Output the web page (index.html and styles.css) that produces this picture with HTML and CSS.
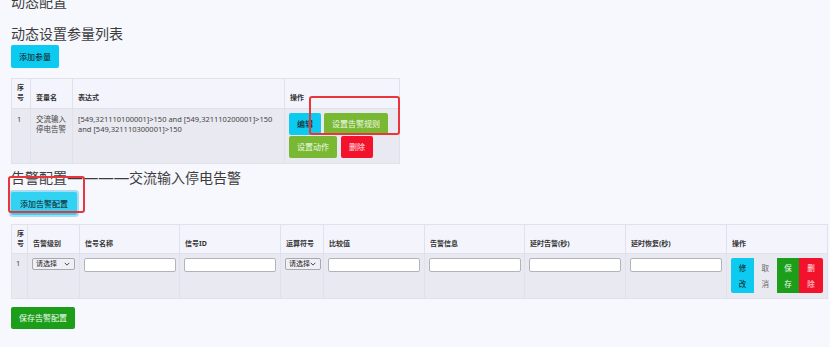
FILE: index.html
```html
<!DOCTYPE html>
<html>
<head>
	<title>动态配置</title>
	<meta charset="utf-8">
	<link rel="stylesheet" href="styles.css">
</head>
<body>
	<div class="page">
		<h3 class="title top">动态配置</h3>
		<h3 class="title sub">动态设置参量列表</h3>
		<div class="bar">
			<button class="btn info">添加参量</button>
		</div>

		<!-- 参量列表 -->
		<table class="grid var-table">
			<colgroup>
				<col style="width:19px">
				<col style="width:42px">
				<col style="width:212px">
				<col style="width:115px">
			</colgroup>
			<thead>
				<tr>
					<th>序号</th>
					<th>变量名</th>
					<th>表达式</th>
					<th>操作</th>
				</tr>
			</thead>
			<tbody>
				<tr>
					<td>1</td>
					<td>交流输入停电告警</td>
					<td class="expr">[549,321110100001]&gt;150 and [549,321110200001]&gt;150 and [549,321110300001]&gt;150</td>
					<td class="ops">
						<div class="ops-list">
							<button class="btn info">编辑</button>
							<button class="btn lime">设置告警规则</button>
							<button class="btn lime">设置动作</button>
							<button class="btn red">删除</button>
						</div>
					</td>
				</tr>
			</tbody>
		</table>

		<h3 class="title alarm">告警配置<span class="dash">————</span>交流输入停电告警</h3>
		<div class="bar">
			<button class="btn info focus">添加告警配置</button>
		</div>

		<!-- 告警配置列表 -->
		<table class="grid alarm-table">
			<colgroup>
				<col style="width:16px">
				<col style="width:52px">
				<col style="width:100px">
				<col style="width:101px">
				<col style="width:43px">
				<col style="width:101px">
				<col style="width:100px">
				<col style="width:101px">
				<col style="width:101px">
				<col style="width:101px">
			</colgroup>
			<thead>
				<tr>
					<th>序号</th>
					<th>告警级别</th>
					<th>信号名称</th>
					<th>信号ID</th>
					<th>运算符号</th>
					<th>比较值</th>
					<th>告警信息</th>
					<th>延时告警(秒)</th>
					<th>延时恢复(秒)</th>
					<th>操作</th>
				</tr>
			</thead>
			<tbody>
				<tr>
					<td>1</td>
					<td>
						<span class="sel">
							<select><option>请选择</option></select>
							<svg viewBox="0 0 8 5" width="6" height="4"><path d="M1 1l3 3 3-3" fill="none" stroke="#444" stroke-width="1.3"/></svg>
						</span>
					</td>
					<td><input class="field" type="text"></td>
					<td><input class="field" type="text"></td>
					<td>
						<span class="sel">
							<select><option>请选择</option></select>
							<svg viewBox="0 0 8 5" width="6" height="4"><path d="M1 1l3 3 3-3" fill="none" stroke="#444" stroke-width="1.3"/></svg>
						</span>
					</td>
					<td><input class="field" type="text"></td>
					<td><input class="field" type="text"></td>
					<td><input class="field" type="text"></td>
					<td><input class="field" type="text"></td>
					<td class="ops">
						<div class="row-btns">
							<button class="vbtn info">修改</button>
							<button class="vbtn plain">取消</button>
							<button class="vbtn green">保存</button>
							<button class="vbtn red">删除</button>
						</div>
					</td>
				</tr>
			</tbody>
		</table>

		<div class="bar save-bar">
			<button class="btn green">保存告警配置</button>
		</div>

		<!-- 标注框 -->
		<div class="mark mark-rule"></div>
		<div class="mark mark-add"></div>
	</div>
</body>
</html>
```

FILE: styles.css
```css
body{
	margin: 0;
	background-color: #f7f7fe;
	font-family: "Noto Sans", "Noto Sans CJK SC", sans-serif;
	color: #444;
}

.page{
	position: relative;
	padding: 0 11px;
}

/*标题*/
.title{
	font-size: 14px;
	line-height: 17px;
	font-weight: normal;
	color: #3d3d3d;
	margin: 0;
}
.top{
	margin-top: -7px;
}
.sub{
	margin-top: 15px;
	margin-bottom: 3px;
}
.alarm{
	height: 17px;
	margin-top: 5px;
	margin-bottom: 6px;
}
/*破折号用 DejaVu，字形占满整个字宽，能连成一条线*/
.dash{
	font-family: "DejaVu Sans", sans-serif;
	font-size: 16px;
	letter-spacing: -0.5px;
	line-height: 10px;
}

.bar{
	display: flex;
}

/*按钮*/
.btn{
	height: 23px;
	padding: 0 8px;
	border: none;
	border-radius: 2px;
	font-family: inherit;
	font-size: 8px;
	line-height: 23px;
	color: #fff;
	cursor: pointer;
}
.info{
	background-color: #0dcaf0;
	color: #111;
}
.focus{
	background-color: #31d2f2;
	padding: 0 9px;
	box-shadow: 0 0 0 2px rgba(120, 200, 225, .6);
}
.lime{
	background-color: #78b832;
	color: #f4f9ee;
}
.red{
	background-color: #f3122b;
	color: #ffe6e9;
}
.green{
	background-color: #1c9e1a;
	color: #f2fbf2;
}

/*表格*/
.grid{
	table-layout: fixed;
	border-collapse: collapse;
	font-size: 7px;
	line-height: 10px;
	color: #444;
}
.grid th,
.grid td{
	border: 1px solid #e0e1ea;
	padding: 4px 5px 5px;
	text-align: left;
}
.grid th{
	background-color: #f4f4fc;
	vertical-align: bottom;
	font-weight: bold;
	color: #333;
	height: 20px;
}
.grid td{
	background-color: #e9e9f1;
	vertical-align: top;
	font-size: 7.5px;
}

.var-table{
	width: 388px;
	margin-top: 10px;
}
.var-table td{
	height: 44px;
	padding-top: 5px;
}
.var-table .expr{
	padding-right: 2px;
}
.var-table .ops{
	padding: 4px 4px 5px;
}
.ops-list{
	display: flex;
	flex-wrap: wrap;
	gap: 1px 3px;
}
.ops-list .btn{
	height: 22px;
	line-height: 22px;
}
.ops-list .red{
	margin-left: 1px;
}

.alarm-table{
	width: 816px;
	margin-top: 9px;
}
.alarm-table th{
	padding: 4px 4px 4px 5px;
}
.alarm-table td{
	height: 35px;
	padding: 4px 4px 5px;
}

/*下拉框*/
.sel{
	position: relative;
	display: inline-block;
}
.sel select{
	appearance: none;
	-webkit-appearance: none;
	width: 43px;
	height: 12px;
	padding: 0 0 0 3px;
	border: 1px solid #a8a8b0;
	border-radius: 2px;
	background-color: #efeff5;
	font-family: inherit;
	font-size: 7px;
	line-height: 10px;
	color: #222;
	display: block;
}
.alarm-table td:nth-child(5) .sel select{
	width: 36px;
}
.sel svg{
	position: absolute;
	right: 5px;
	top: 4px;
}

/*输入框*/
.field{
	display: block;
	width: 92px;
	height: 14px;
	box-sizing: border-box;
	border: 1px solid #b3b3bb;
	border-radius: 2px;
	background-color: #fff;
	padding: 0 3px;
}

/*竖排按钮*/
.row-btns{
	display: flex;
}
.vbtn{
	width: 23px;
	height: 35px;
	padding: 2px 7px;
	border: none;
	border-radius: 0;
	font-family: inherit;
	font-size: 7.5px;
	line-height: 16px;
	text-align: center;
	cursor: pointer;
}
.vbtn.info{
	border-radius: 2px 0 0 2px;
}
.plain{
	background: none;
	color: #666;
}
.vbtn.red{
	width: 24px;
	border-radius: 0 2px 2px 0;
}

.save-bar{
	margin-top: 8px;
}
.save-bar .btn{
	height: 22px;
	line-height: 22px;
}

/*红色标注框*/
.mark{
	position: absolute;
	border: 2px solid #e8363b;
	border-radius: 3px;
}
.mark-rule{
	left: 309px;
	top: 103px;
	width: 87px;
	height: 35px;
}
.mark-add{
	left: 8px;
	top: 183px;
	width: 73px;
	height: 33px;
}
```
